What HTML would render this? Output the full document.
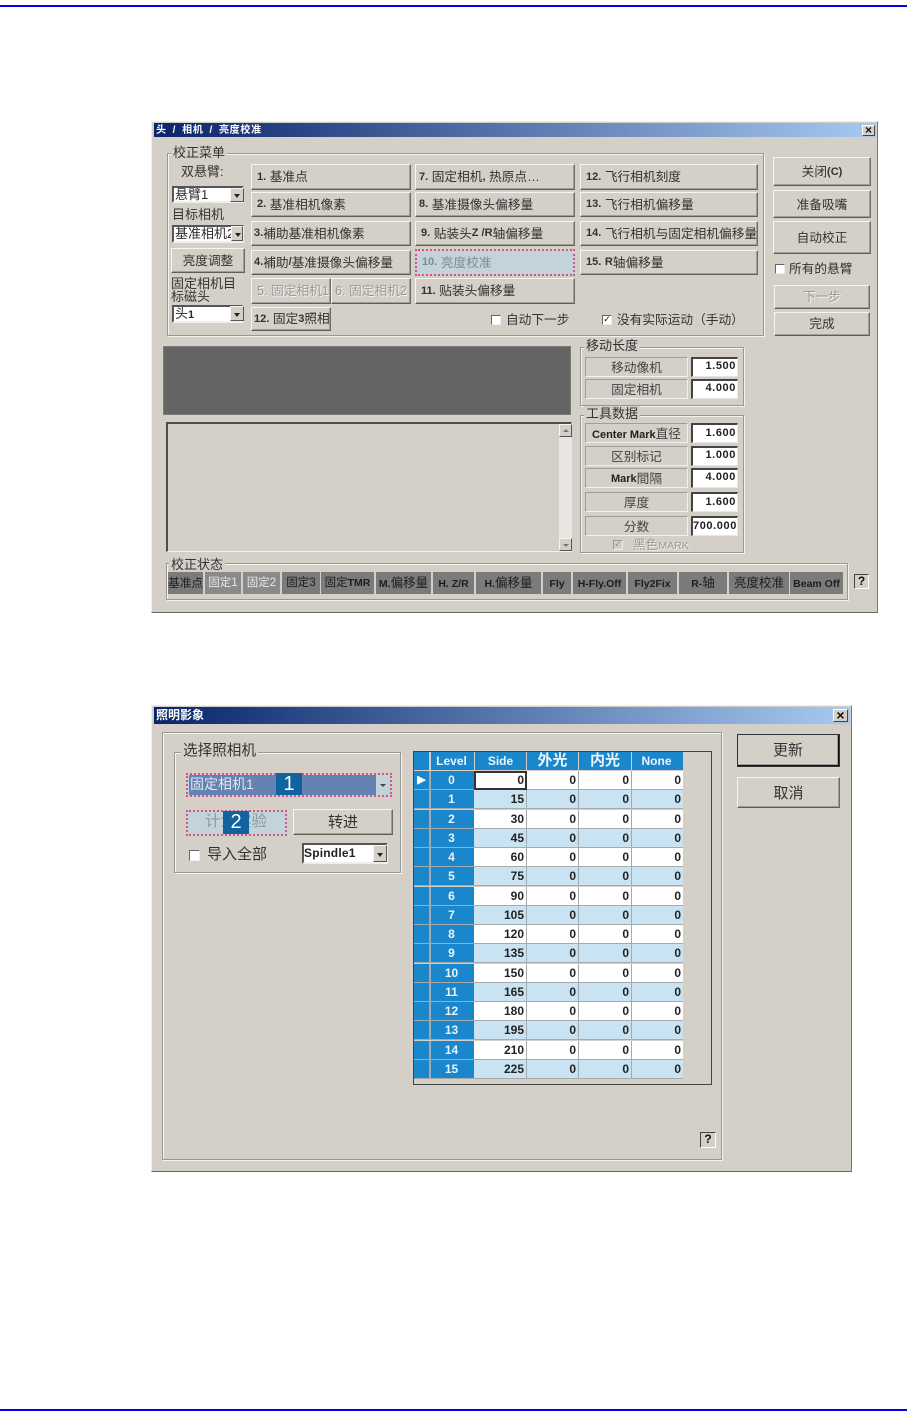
<!DOCTYPE html>
<html lang="zh"><head><meta charset="utf-8"><title>校正</title>
<style>
html,body{margin:0;padding:0;background:#fff}
body{position:relative;width:907px;height:1421px;overflow:hidden;font-family:"Liberation Sans","Noto Sans CJK SC",sans-serif;color:#2b2b2b;font-size:13px}
div,span{position:absolute;box-sizing:border-box;white-space:nowrap}
.dlg{background:#d4d0c8;border-right:1px solid #777;border-bottom:1px solid #666;border-top:1px solid #f0eee9;border-left:1px solid #efede8}
.tb{background:linear-gradient(90deg,#0a246a,#a6caf0);color:#fff;font-weight:bold;font-size:10px;padding-left:2px}
.x{background:#d4d0c8;border:1px solid;border-color:#fff #444 #444 #fff;color:#111;font:bold 12px/11px "Liberation Sans",sans-serif;text-align:center}
.g{border:1px solid #989793;box-shadow:1px 1px 0 #f4f3ef,inset 1px 1px 0 #f4f3ef}
.l{background:#d4d0c8;padding:0 2px;line-height:16px;height:16px;color:#333}
.b{background:#d4d0c8;border:1px solid;border-color:#f6f5f2 #6c6b68 #5e5d5a #f6f5f2;box-shadow:inset -1px -1px 0 #a09e99;display:flex;align-items:center;padding-left:5px;padding-bottom:3px;font-size:12.7px;font-weight:400;color:#333;overflow:hidden}
.b em{font-style:normal;font-weight:bold;font-size:11px;position:relative;top:1px}
.c{justify-content:center;padding-left:0;padding-bottom:2px}
.dis{color:#999;text-shadow:1px 1px 0 #f4f3ef}
.lab{background:#d4d0c8;border:1px solid;border-color:#a09e99 #f2f1ed #f2f1ed #a09e99;display:flex;align-items:center;justify-content:center;font-size:12.7px;color:#444;padding-bottom:2px}
.lab em{font-style:normal;font-weight:bold;font-size:11px;color:#222;position:relative;top:2px}
.in{background:#fff;border:1px solid;border-color:#444 #e8e6e2 #e8e6e2 #444;border-width:2px 1px 1px 2px;font:bold 11px/18px "Liberation Sans",sans-serif;text-align:right;padding-right:1px;letter-spacing:.6px;color:#222}
.cb{background:#fff;border:1px solid;border-color:#666 #eee #eee #666;width:10px;height:10px}
.combo{background:#fff;border:2px solid;border-color:#555 #eee #eee #555;font-size:13px;line-height:13px;padding-left:1px;overflow:hidden}
.ar{background:#d4d0c8;border:1px solid;border-color:#f6f5f2 #555 #555 #f6f5f2;width:14px}
.ar:after{content:"";position:absolute;left:3px;top:50%;margin-top:-1px;border:3px solid transparent;border-top:4px solid #222;border-bottom:0}
.sc{background:#d4d0c8;border:1px solid;border-color:#f6f5f2 #555 #555 #f6f5f2}
.st{background:#7b7b7b;color:#1d1d1d;top:572px;height:22px;font-size:12.5px;line-height:23px;text-align:center;overflow:hidden}
.st.w{color:#e8e8e8;font-size:11.5px}
.st b{font-size:10.5px}
.r{left:414px;width:269px;height:19px;background:#a4abae}
.r i,.r b,.r u{position:absolute;top:0;height:18px;font:bold 12px/19px "Liberation Sans",sans-serif;text-decoration:none;text-align:right;color:#222;background:#fff;padding-right:2px;box-sizing:border-box}
.r i{left:0;width:15px;background:#1a86cc;color:#fff;font-size:11px;text-align:center;padding:0}
.r b{left:17px;width:43px;background:#1a86cc;color:#e8f3fa;text-align:center;padding:0 2px 0 0}
.r u:nth-child(3){left:60px;width:52px}
.r u:nth-child(4){left:113px;width:51px}
.r u:nth-child(5){left:165px;width:52px}
.r u:nth-child(6){left:218px;width:51px}
.alt u{background:#c9e3f3}
.h{background:#1a86cc;color:#eaf4fb;top:752px;height:18px;font:bold 12px/18px "Liberation Sans","Noto Sans CJK SC",sans-serif;text-align:center}
.hlp{background:#d4d0c8;border:1px solid;border-color:#444 #fff #fff #444;font:bold 12px/13px "Liberation Sans",sans-serif;text-align:center;color:#111}
.dot{outline:2px dotted #e0507c;outline-offset:-2px}
</style></head><body>

<div style="left:0;top:5px;width:907px;height:2px;background:#0000f0"></div>
<div style="left:0;top:1409px;width:907px;height:2px;background:#0000f0"></div>

<!-- DIALOG 1 -->
<div class="dlg" style="left:151px;top:121px;width:727px;height:492px"></div>
<div class="tb" style="left:154px;top:123px;width:722px;height:14px;line-height:15px;letter-spacing:.7px;word-spacing:2.5px">头 / 相机 / 亮度校准</div>
<div class="x" style="left:862px;top:125px;width:13px;height:11px;line-height:9px">×</div>

<div class="g" style="left:167px;top:153px;width:597px;height:183px"></div>
<div class="l" style="left:171px;top:145px">校正菜单</div>
<div style="left:181px;top:164px;line-height:16px;color:#333">双悬臂:</div>
<div class="combo" style="left:172px;top:186px;width:72px;height:17px">悬臂1</div><div class="ar" style="left:230px;top:188px;height:14px"></div>
<div style="left:172px;top:207px;line-height:16px;color:#333">目标相机</div>
<div class="combo" style="left:172px;top:225px;width:72px;height:18px">基准相机2</div><div class="ar" style="left:231px;top:226px;height:15px;width:12px"></div>
<div class="b c" style="left:171px;top:248px;width:74px;height:25px">亮度调整</div>
<div style="left:171px;top:277px;line-height:13px;color:#333">固定相机目<br>标磁头</div>
<div class="combo" style="left:172px;top:305px;width:71px;height:18px">头<b style="font-size:11px">1</b></div><div class="ar" style="left:230px;top:306px;height:15px"></div>

<div class="b" style="left:251px;top:164px;width:160px;height:26px"><em>1.</em>&nbsp;基准点</div>
<div class="b" style="left:251px;top:192px;width:160px;height:25px"><em>2.</em>&nbsp;基准相机像素</div>
<div class="b" style="left:251px;top:221px;width:160px;height:25px;padding-left:2px"><em>3.</em>補助基准相机像素</div>
<div class="b" style="left:251px;top:250px;width:160px;height:25px;padding-left:2px"><em>4.</em>補助<em>/</em>基准摄像头偏移量</div>
<div class="b dis" style="left:251px;top:278px;width:80px;height:26px;padding-left:5px">5. 固定相机1</div>
<div class="b dis" style="left:331px;top:278px;width:80px;height:26px;padding-left:3px">6. 固定相机2</div>
<div class="b" style="left:251px;top:307px;width:80px;height:24px;padding-left:2px"><em>12.</em>&nbsp;固定<em>3</em>照相</div>

<div class="b" style="left:415px;top:164px;width:160px;height:26px;padding-left:3px"><em>7.</em>&nbsp;固定相机<em>,</em>&nbsp;热原点…</div>
<div class="b" style="left:415px;top:192px;width:160px;height:25px;padding-left:3px"><em>8.</em>&nbsp;基准摄像头偏移量</div>
<div class="b" style="left:415px;top:221px;width:160px;height:25px"><em>9.</em>&nbsp;贴装头<em>Z /R</em>轴偏移量</div>
<div class="b dot" style="left:415px;top:249px;width:160px;height:27px;background:#c3d3da;border:0;box-shadow:none;color:#7d8c93;padding-left:7px"><em>10.</em>&nbsp;亮度校准</div>
<div class="b" style="left:415px;top:278px;width:160px;height:26px"><em>11.</em>&nbsp;贴装头偏移量</div>

<div class="b" style="left:580px;top:164px;width:178px;height:26px"><em>12.</em>&nbsp;飞行相机刻度</div>
<div class="b" style="left:580px;top:192px;width:178px;height:25px"><em>13.</em>&nbsp;飞行相机偏移量</div>
<div class="b" style="left:580px;top:221px;width:178px;height:25px"><em>14.</em>&nbsp;飞行相机与固定相机偏移量</div>
<div class="b" style="left:580px;top:250px;width:178px;height:25px"><em>15.</em>&nbsp;<em>R</em>轴偏移量</div>

<div class="cb" style="left:491px;top:315px"></div>
<div style="left:506px;top:312px;line-height:16px;color:#333;font-size:12.7px">自动下一步</div>
<div class="cb" style="left:602px;top:315px;font:bold 9px/8px 'DejaVu Sans',sans-serif;color:#111;text-align:center">✓</div>
<div style="left:617px;top:312px;line-height:16px;color:#333;font-size:12.7px">没有实际运动（手动）</div>

<div class="b c" style="left:773px;top:157px;width:98px;height:29px">关闭<em>(C)</em></div>
<div class="b c" style="left:773px;top:190px;width:98px;height:28px">准备吸嘴</div>
<div class="b c" style="left:773px;top:221px;width:98px;height:33px">自动校正</div>
<div class="cb" style="left:775px;top:264px"></div>
<div style="left:789px;top:261px;line-height:16px;color:#333;font-size:12.7px">所有的悬臂</div>
<div class="b c dis" style="left:774px;top:285px;width:96px;height:24px;padding-bottom:3px">下一步</div>
<div class="b c" style="left:774px;top:312px;width:96px;height:24px;padding-bottom:3px">完成</div>

<div style="left:163px;top:346px;width:408px;height:69px;background:#646464;border:1px solid #7c7c7c"></div>

<div style="left:166px;top:422px;width:406px;height:130px;background:#d4d0c8;border:solid;border-color:#4c4c4c #f2f1ed #f2f1ed #4c4c4c;border-width:2px 1px 1px 2px"></div>
<div style="left:559px;top:424px;width:13px;height:127px;background:#e8e6e2"></div>
<div class="sc" style="left:559px;top:424px;width:13px;height:13px"></div>
<div style="left:563px;top:429px;border:3px solid transparent;border-bottom:3px solid #777;border-top:0"></div>
<div class="sc" style="left:559px;top:538px;width:13px;height:13px"></div>
<div style="left:563px;top:544px;border:3px solid transparent;border-top:3px solid #777;border-bottom:0"></div>

<div class="g" style="left:580px;top:347px;width:164px;height:59px"></div>
<div class="l" style="left:584px;top:338px">移动长度</div>
<div class="lab" style="left:585px;top:357px;width:103px;height:20px">移动像机</div>
<div class="in" style="left:691px;top:357px;width:47px;height:20px;line-height:15px">1.500</div>
<div class="lab" style="left:585px;top:379px;width:103px;height:20px">固定相机</div>
<div class="in" style="left:691px;top:379px;width:47px;height:20px;line-height:15px">4.000</div>

<div class="g" style="left:580px;top:415px;width:164px;height:138px"></div>
<div class="l" style="left:584px;top:406px">工具数据</div>
<div class="lab" style="left:585px;top:423px;width:103px;height:20px;padding-bottom:1px"><em>Center Mark</em>直径</div>
<div class="in" style="left:691px;top:423px;width:47px;height:20px;line-height:17px">1.600</div>
<div class="lab" style="left:585px;top:446px;width:103px;height:20px">区别标记</div>
<div class="in" style="left:691px;top:446px;width:47px;height:20px;line-height:15px">1.000</div>
<div class="lab" style="left:585px;top:468px;width:103px;height:20px"><em>Mark</em>間隔</div>
<div class="in" style="left:691px;top:468px;width:47px;height:20px;line-height:15px">4.000</div>
<div class="lab" style="left:585px;top:492px;width:103px;height:20px">厚度</div>
<div class="in" style="left:691px;top:492px;width:47px;height:20px;line-height:16px">1.600</div>
<div class="lab" style="left:585px;top:516px;width:103px;height:20px">分数</div>
<div class="in" style="left:691px;top:516px;width:47px;height:20px;line-height:16px">700.000</div>
<div class="cb" style="left:613px;top:540px;background:#d4d0c8;border-color:#999 #eee #eee #999;font:bold 9px/8px 'DejaVu Sans',sans-serif;color:#888;text-align:center">✓</div>
<div class="dis" style="left:633px;top:537px;line-height:16px;font-size:12.7px">黑色<span style="position:static;font-size:10.5px">MARK</span></div>

<div class="g" style="left:166px;top:563px;width:682px;height:37px"></div>
<div class="l" style="left:169px;top:557px">校正状态</div>
<div class="st" style="left:168px;width:35px;font-size:11.7px">基准点</div>
<div class="st w" style="left:205px;width:36px;background:#8a8a8a">固定1</div>
<div class="st w" style="left:243px;width:37px;background:#8a8a8a">固定2</div>
<div class="st" style="left:282px;width:38px;font-size:11.5px">固定3</div>
<div class="st" style="left:321px;width:53px;font-size:11.5px">固定<b>TMR</b></div>
<div class="st" style="left:376px;width:55px"><b>M.</b>偏移量</div>
<div class="st" style="left:433px;width:41px"><b>H. Z/R</b></div>
<div class="st" style="left:476px;width:65px"><b>H.</b>偏移量</div>
<div class="st" style="left:543px;width:28px"><b>Fly</b></div>
<div class="st" style="left:573px;width:53px"><b>H-Fly.Off</b></div>
<div class="st" style="left:628px;width:49px"><b>Fly2Fix</b></div>
<div class="st" style="left:679px;width:48px"><b>R-</b>轴</div>
<div class="st" style="left:729px;width:60px">亮度校准</div>
<div class="st" style="left:790px;width:53px"><b>Beam Off</b></div>
<div class="hlp" style="left:854px;top:574px;width:15px;height:15px">?</div>

<!-- DIALOG 2 -->
<div class="dlg" style="left:151px;top:705px;width:701px;height:467px"></div>
<div class="tb" style="left:154px;top:707px;width:696px;height:17px;line-height:17px;font-size:12px">照明影象</div>
<div class="x" style="left:833px;top:709px;width:15px;height:13px;line-height:11px;font-size:14px">×</div>

<div class="g" style="left:162px;top:732px;width:560px;height:428px"></div>
<div class="g" style="left:174px;top:752px;width:227px;height:121px"></div>
<div class="l" style="left:181px;top:742px;font-size:14.6px;height:18px;line-height:18px">选择照相机</div>

<div class="dot" style="left:186px;top:773px;width:206px;height:24px;background:#c3d3da"></div>
<div style="left:189px;top:775px;width:187px;height:20px;background:#6483b2;color:#dfe7f0;font-size:14px;line-height:19px;padding-left:1px">固定相机1</div>
<div style="left:376px;top:775px;width:14px;height:20px;background:#c3d3da"></div>
<div style="left:380px;top:784px;border:3px solid transparent;border-top:3px solid #444;border-bottom:0"></div>
<div style="left:276px;top:773px;width:26px;height:22px;background:#12629f;color:#fff;font-size:20px;line-height:23px;text-align:center">1</div>

<div class="dot" style="left:186px;top:810px;width:101px;height:26px;background:#c3d3da;color:#8a9ba3;font-size:15.5px;line-height:23px;padding-left:19px">计划实验</div>
<div style="left:223px;top:811px;width:26px;height:23px;background:#12629f;color:#fff;font-size:20px;line-height:23px;text-align:center">2</div>
<div class="b c" style="left:293px;top:809px;width:100px;height:26px;font-size:15px;padding-bottom:1px">转进</div>

<div class="cb" style="left:189px;top:850px;width:11px;height:11px"></div>
<div style="left:207px;top:846px;font-size:15px;line-height:18px;color:#333">导入全部</div>
<div class="combo" style="left:302px;top:843px;width:86px;height:21px;font:bold 12px/16px 'Liberation Sans',sans-serif;letter-spacing:.2px;color:#222;padding-left:0">Spindle1</div>
<div class="ar" style="left:373px;top:845px;height:17px"></div>

<div style="left:413px;top:751px;width:299px;height:334px;border:1px solid #444;background:#d4d0c8"></div>
<div class="h" style="left:414px;width:15px"></div>
<div class="h" style="left:431px;width:43px;padding-right:2px">Level</div>
<div class="h" style="left:475px;width:51px">Side</div>
<div class="h" style="left:527px;width:51px;font-size:15px">外光</div>
<div class="h" style="left:579px;width:52px;font-size:15px">内光</div>
<div class="h" style="left:632px;width:51px;padding-right:2px">None</div>

<div class="r" style="top:771px"><i>▶</i><b>0</b><u>0</u><u>0</u><u>0</u><u>0</u></div>
<div class="r alt" style="top:790px"><i></i><b>1</b><u>15</u><u>0</u><u>0</u><u>0</u></div>
<div class="r" style="top:810px"><i></i><b>2</b><u>30</u><u>0</u><u>0</u><u>0</u></div>
<div class="r alt" style="top:829px"><i></i><b>3</b><u>45</u><u>0</u><u>0</u><u>0</u></div>
<div class="r" style="top:848px"><i></i><b>4</b><u>60</u><u>0</u><u>0</u><u>0</u></div>
<div class="r alt" style="top:867px"><i></i><b>5</b><u>75</u><u>0</u><u>0</u><u>0</u></div>
<div class="r" style="top:887px"><i></i><b>6</b><u>90</u><u>0</u><u>0</u><u>0</u></div>
<div class="r alt" style="top:906px"><i></i><b>7</b><u>105</u><u>0</u><u>0</u><u>0</u></div>
<div class="r" style="top:925px"><i></i><b>8</b><u>120</u><u>0</u><u>0</u><u>0</u></div>
<div class="r alt" style="top:944px"><i></i><b>9</b><u>135</u><u>0</u><u>0</u><u>0</u></div>
<div class="r" style="top:964px"><i></i><b>10</b><u>150</u><u>0</u><u>0</u><u>0</u></div>
<div class="r alt" style="top:983px"><i></i><b>11</b><u>165</u><u>0</u><u>0</u><u>0</u></div>
<div class="r" style="top:1002px"><i></i><b>12</b><u>180</u><u>0</u><u>0</u><u>0</u></div>
<div class="r alt" style="top:1021px"><i></i><b>13</b><u>195</u><u>0</u><u>0</u><u>0</u></div>
<div class="r" style="top:1041px"><i></i><b>14</b><u>210</u><u>0</u><u>0</u><u>0</u></div>
<div class="r alt" style="top:1060px"><i></i><b>15</b><u>225</u><u>0</u><u>0</u><u>0</u></div>
<div style="left:474px;top:771px;width:53px;height:19px;border:2px solid #333"></div>

<div class="hlp" style="left:700px;top:1132px;width:16px;height:16px">?</div>

<div class="b c" style="left:737px;top:734px;width:103px;height:33px;font-size:15px;padding-bottom:1px;border-color:#f6f5f2 #111 #111 #f6f5f2;border-width:1px 2px 2px 1px;outline:1px solid #333;outline-offset:-1px">更新</div>
<div class="b c" style="left:737px;top:777px;width:103px;height:31px;font-size:15px;padding-bottom:1px">取消</div>

</body></html>
